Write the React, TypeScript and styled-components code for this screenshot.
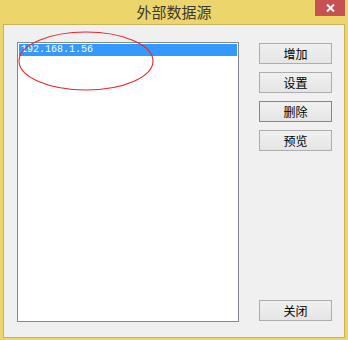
import React from "react";
import styled, { createGlobalStyle } from "styled-components";

const GlobalStyle = createGlobalStyle`
    html, body {
        margin: 0;
        padding: 0;
        background: #ffffff;
    }
    * {
        box-sizing: border-box;
    }
`

const sources = ["192.168.1.56"]
const actions = ["增加", "设置", "删除", "预览"]

export default function App() {
    return (
        <>
            <GlobalStyle />
            <Window>
                <TitleBar>
                    <span />
                    <Title>外部数据源</Title>
                    <CloseButton aria-label="close">
                        <svg width="9" height="8" viewBox="0 0 9 8">
                            <path d="M1 0.5 L8 7.5 M8 0.5 L1 7.5" stroke="#ffffff" strokeWidth="2" />
                        </svg>
                    </CloseButton>
                </TitleBar>
                <Body>
                    <ListBox>
                        {sources.map((s, i) => (
                            <ListItem key={s} selected={i === 0}>{s}</ListItem>
                        ))}
                        <Annotation width="138" height="62" viewBox="0 0 138 62">
                            <ellipse cx="69" cy="31" rx="67" ry="29" fill="none" stroke="#e8262a" strokeWidth="1.1" />
                        </Annotation>
                    </ListBox>
                    <ButtonColumn>
                        {actions.map((a) => (
                            <DialogButton key={a} focused={a === "删除"}>{a}</DialogButton>
                        ))}
                        <CloseDialogButton focused={false}>关闭</CloseDialogButton>
                    </ButtonColumn>
                </Body>
            </Window>
        </>
    )
}

const Window = styled.div`
    display: flex;
    flex-direction: column;
    width: 348px;
    height: 340px;
    padding: 0 3px 2px 3px;
    background-color: #ecd56b;
`

const TitleBar = styled.div`
    display: grid;
    grid-template-columns: 1fr auto 1fr;
    align-items: start;
    height: 24px;
    flex-shrink: 0;
`

const Title = styled.div`
    padding-top: 2px;
    font-family: "Noto Sans CJK SC", "Noto Sans", sans-serif;
    font-size: 15px;
    line-height: 19px;
    color: #3a3a30;
`

const CloseButton = styled.div`
    justify-self: end;
    display: flex;
    justify-content: center;
    align-items: center;
    width: 30px;
    height: 16px;
    background-color: #c75050;
`

const Body = styled.div`
    position: relative;
    display: flex;
    flex: 1;
    gap: 20px;
    padding: 17px 12px 15px 13px;
    border: 1px solid #c8b25c;
    background-color: #f0f0f0;
`

const ListBox = styled.div`
    position: relative;
    width: 222px;
    padding: 1px;
    border: 1px solid #828790;
    background-color: #ffffff;
`

const ListItem = styled.div<{ selected: boolean }>`
    height: 12px;
    padding-left: 2px;
    font-family: "Liberation Mono", monospace;
    font-size: 10px;
    line-height: 12px;
    color: ${(props) => props.selected ? "#ffffff" : "#000000"};
    background-color: ${(props) => props.selected ? "#3399ff" : "transparent"};
`

const Annotation = styled.svg`
    position: absolute;
    left: -1px;
    top: -13px;
    overflow: visible;
`

const ButtonColumn = styled.div`
    display: flex;
    flex-direction: column;
    gap: 8px;
    width: 73px;
    padding: 1px 0 1px;
`

const DialogButton = styled.div<{ focused: boolean }>`
    display: flex;
    justify-content: center;
    align-items: center;
    height: 21px;
    border: 1px solid ${(props) => props.focused ? "#4a94e6" : "#adadad"};
    background: linear-gradient(#f0f0f0, #e5e5e5);
    font-family: "Noto Sans CJK SC", sans-serif;
    font-size: 12px;
    color: #000000;
`

const CloseDialogButton = styled(DialogButton)`
    margin-top: auto;
`
